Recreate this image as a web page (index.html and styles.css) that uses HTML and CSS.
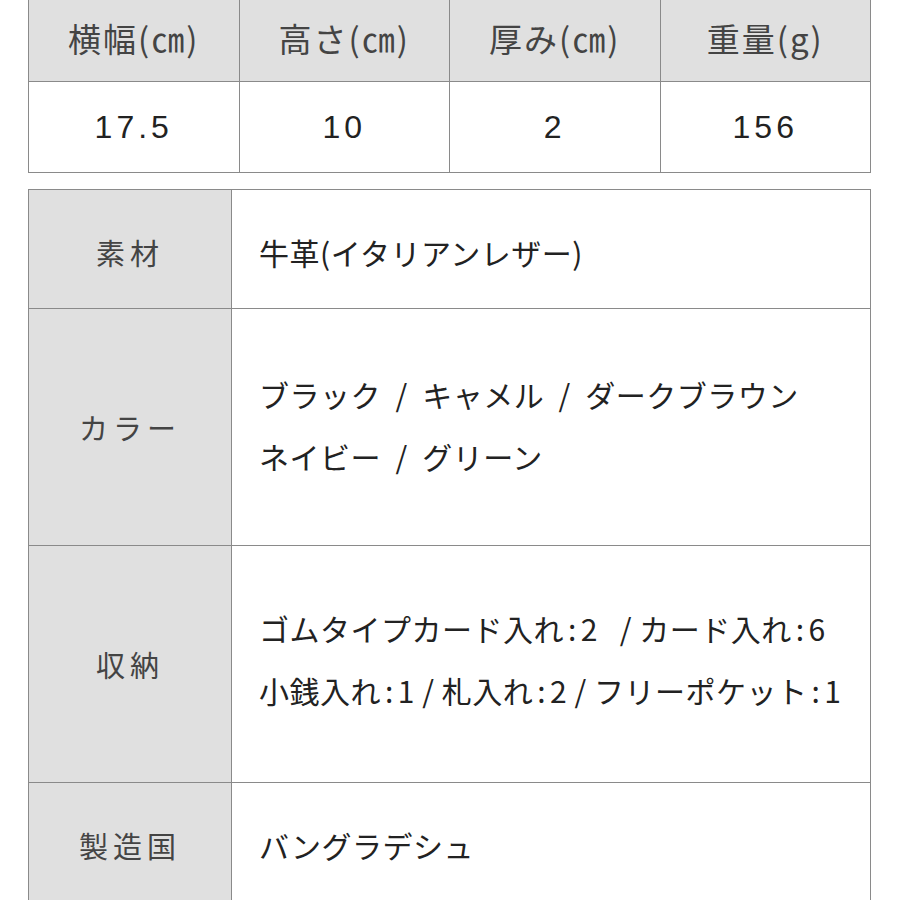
FILE: index.html
```html
<!DOCTYPE html>
<html lang="ja">
<head>
<meta charset="utf-8">
<link rel="stylesheet" href="styles.css">
</head>
<body>
<div class="page">
  <table class="size">
    <tr class="head">
      <th>横幅(㎝)</th>
      <th>高さ(㎝)</th>
      <th>厚み(㎝)</th>
      <th>重量(g)</th>
    </tr>
    <tr class="vals">
      <td>17.5</td>
      <td>10</td>
      <td>2</td>
      <td>156</td>
    </tr>
  </table>
  <table class="spec">
    <tr class="r1">
      <th>素材</th>
      <td>牛革(イタリアンレザー)</td>
    </tr>
    <tr class="r2">
      <th>カラー</th>
      <td>ブラック&nbsp; /&nbsp; キャメル&nbsp; /&nbsp; ダークブラウン<br>ネイビー&nbsp; /&nbsp; グリーン</td>
    </tr>
    <tr class="r2 store">
      <th>収納</th>
      <td>ゴムタイプカード入れ<span class="c">:</span>2&nbsp;&nbsp; / カード入れ<span class="c">:</span>6<br>小銭入れ<span class="c">:</span>1 / 札入れ<span class="c">:</span>2 / フリーポケット<span class="c">:</span>1</td>
    </tr>
    <tr class="r1 last">
      <th>製造国</th>
      <td>バングラデシュ</td>
    </tr>
  </table>
</div>
</body>
</html>
```
FILE: styles.css
```css
html, body {
  margin: 0;
  padding: 0;
  background: #ffffff;
}
body {
  font-family: "Noto Sans CJK JP", "Noto Sans", sans-serif;
  color: #222;
}
.page {
  padding-left: 28px;
  width: 843px;
  height: 900px;
  overflow: hidden;
}
table {
  border-collapse: collapse;
  width: 843px;
  table-layout: fixed;
}
.size th, .size td {
  border: 1.5px solid #8a8a8a;
  text-align: center;
  padding: 0;
}
.size tr:first-child th {
  border-top: none;
}
.size .head th {
  background: #e0e0e0;
  height: 75px;
  padding-bottom: 6px;
  font-size: 33px;
  font-weight: normal;
  color: #444;
  letter-spacing: 2px;
}
.size .vals td {
  height: 90px;
  font-family: "Liberation Sans", Arial, sans-serif;
  font-size: 32px;
  letter-spacing: 4px;
  color: #222;
}
.spec {
  margin-top: 16px;
}
.spec th, .spec td {
  border: 1.5px solid #8a8a8a;
  padding: 0;
}
.spec th {
  width: 202px;
  background: #e0e0e0;
  font-weight: normal;
  font-size: 29px;
  color: #444;
  letter-spacing: 5px;
  text-align: center;
}
.spec td {
  text-align: left;
  padding-left: 27px;
  font-size: 30px;
  letter-spacing: 0.5px;
  color: #222;
  line-height: 62px;
}
.spec .r1 th, .spec .r1 td {
  height: 112px;
  padding-top: 6px;
}
.spec .r2 th, .spec .r2 td {
  height: 232px;
  padding-bottom: 4px;
}
.spec .r2 th {
  padding-bottom: 0;
}
.spec .store td {
  height: 226px;
  padding-bottom: 10px;
}
.c {
  margin: 0 4px;
}
```
